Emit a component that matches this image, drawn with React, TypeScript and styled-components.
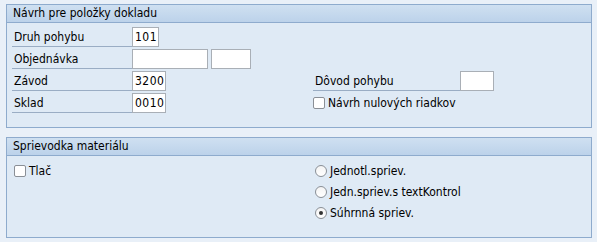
import { createGlobalStyle, styled } from "styled-components"

const GlobalStyle = createGlobalStyle`
  body {
    margin: 0;
    background-color: #e9f0f8;
    font-family: "DejaVu Sans Condensed", "DejaVu Sans", sans-serif;
    font-size: 12px;
    color: #000;
  }
`

const Page = styled.div`
  display: flex;
  flex-direction: column;
  gap: 9px;
  padding: 4px 5px 0 6px;
`

const Group = styled.section`
  border: 1px solid #8eabcd;
  background-color: #dfeaf5;
`

const GroupHeader = styled.div`
  height: 17px;
  line-height: 17px;
  padding-left: 6px;
  background: linear-gradient(#cfe0f1, #bcd2ea);
  border-bottom: 1px solid #8eabcd;
`

const GroupBody = styled.div<{ $pad: string }>`
  display: flex;
  flex-direction: column;
  padding: ${(p) => p.$pad};
`

const Row = styled.div<{ $h?: number }>`
  display: flex;
  align-items: center;
  height: ${(p) => p.$h ?? 22}px;
`

const Field = styled.div<{ $w?: number }>`
  display: flex;
  align-items: center;
  width: ${(p) => (p.$w ? `${p.$w}px` : "auto")};
`

const Label = styled.div<{ $w: number }>`
  width: ${(p) => p.$w}px;
  height: 19px;
  line-height: 19px;
  box-sizing: border-box;
  padding-left: 2px;
  border-bottom: 1px solid #9aadc4;
`

const Input = styled.div<{ $w: number }>`
  width: ${(p) => p.$w}px;
  height: 20px;
  line-height: 18px;
  box-sizing: border-box;
  padding-left: 2px;
  background-color: #fff;
  border: 1px solid #a9afb6;
  font-size: 12px;
  letter-spacing: 0.5px;

  & + & {
    margin-left: 3px;
  }
`

const Check = styled.label`
  display: flex;
  align-items: center;
  gap: 3px;
`

const Box = styled.span`
  width: 12px;
  height: 12px;
  box-sizing: border-box;
  border: 1px solid #8a8f96;
  border-radius: 2px;
  background-color: #fff;
`

const Radio = styled.span<{ $on?: boolean }>`
  display: flex;
  align-items: center;
  justify-content: center;
  width: 12px;
  height: 12px;
  box-sizing: border-box;
  border: 1px solid #8a8f96;
  border-radius: 50%;
  background: linear-gradient(#f4f4f4, #fff);

  &::after {
    content: "";
    display: ${(p) => (p.$on ? "block" : "none")};
    width: 4px;
    height: 4px;
    border-radius: 50%;
    background-color: #333;
  }
`

export default function App() {
  return (
    <>
      <GlobalStyle />
      <Page>
        <Group>
          <GroupHeader>Návrh pre položky dokladu</GroupHeader>
          <GroupBody $pad="3px 0 13px 5px">
            <Row>
              <Field $w={301}>
                <Label $w={120}>Druh pohybu</Label>
                <Input $w={27}>101</Input>
              </Field>
            </Row>
            <Row>
              <Field $w={301}>
                <Label $w={120}>Objednávka</Label>
                <Input $w={76} />
                <Input $w={40} />
              </Field>
            </Row>
            <Row>
              <Field $w={301}>
                <Label $w={120}>Závod</Label>
                <Input $w={34}>3200</Input>
              </Field>
              <Field>
                <Label $w={147}>Dôvod pohybu</Label>
                <Input $w={34} />
              </Field>
            </Row>
            <Row>
              <Field $w={301}>
                <Label $w={120}>Sklad</Label>
                <Input $w={34}>0010</Input>
              </Field>
              <Check>
                <Box />
                Návrh nulových riadkov
              </Check>
            </Row>
          </GroupBody>
        </Group>
        <Group>
          <GroupHeader>Sprievodka materiálu</GroupHeader>
          <GroupBody $pad="4px 0 14px 7px">
            <Row $h={21}>
              <Field $w={301}>
                <Check>
                  <Box />
                  Tlač
                </Check>
              </Field>
              <Check>
                <Radio />
                Jednotl.spriev.
              </Check>
            </Row>
            <Row $h={21}>
              <Field $w={301} />
              <Check>
                <Radio />
                Jedn.spriev.s textKontrol
              </Check>
            </Row>
            <Row $h={21}>
              <Field $w={301} />
              <Check>
                <Radio $on />
                Súhrnná spriev.
              </Check>
            </Row>
          </GroupBody>
        </Group>
      </Page>
    </>
  )
}
